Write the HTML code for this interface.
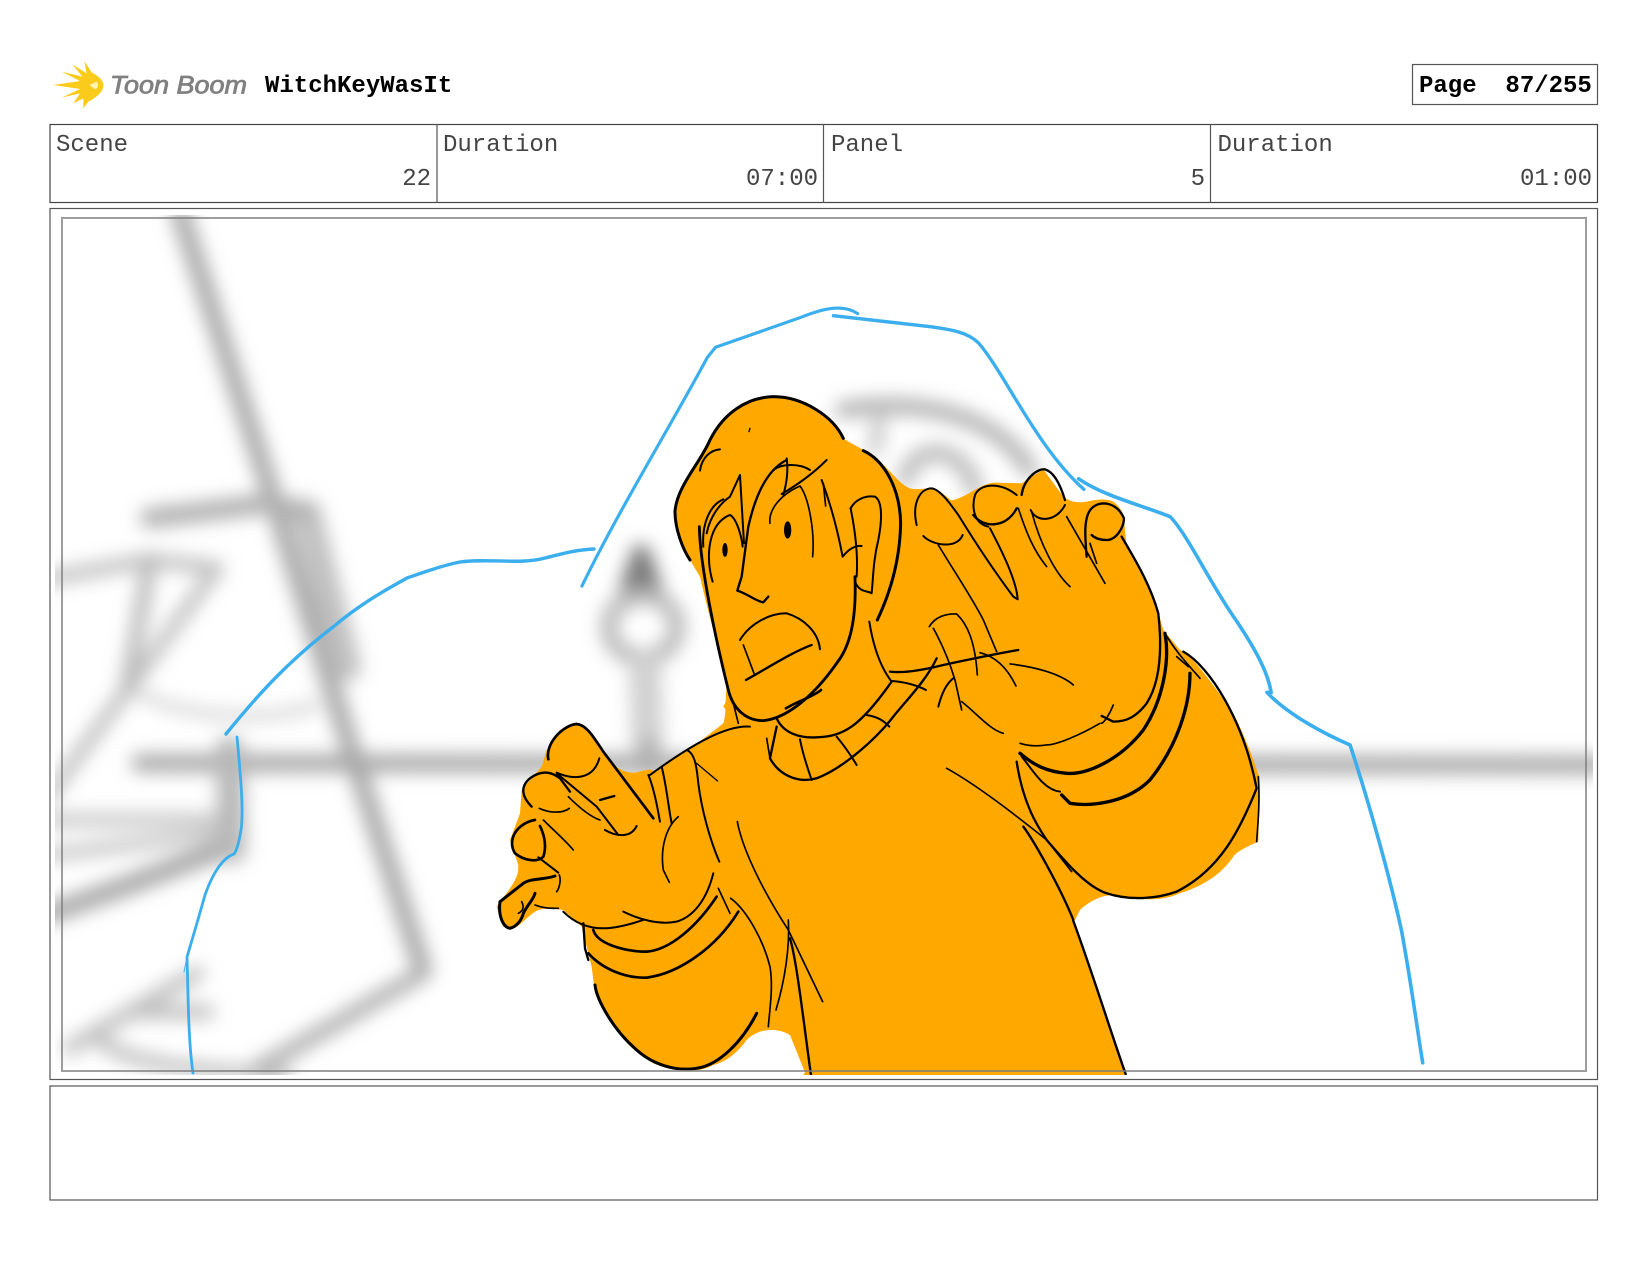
<!DOCTYPE html>
<html><head><meta charset="utf-8"><title>WitchKeyWasIt</title>
<style>
html,body{margin:0;padding:0;background:#fff;width:1650px;height:1275px;overflow:hidden}
svg{display:block}
text{font-family:"Liberation Mono",monospace;font-size:24px;fill:#444}
.b{font-weight:bold;fill:#000}
.k path{fill:none;stroke:#000;stroke-linecap:round;stroke-linejoin:round}
.o{fill:#FFA800;stroke:none}
</style></head><body>
<svg width="1650" height="1275" viewBox="0 0 1650 1275" xmlns="http://www.w3.org/2000/svg">
<defs>
<filter id="bl" x="0" y="0" width="1650" height="1275" filterUnits="userSpaceOnUse" primitiveUnits="userSpaceOnUse"><feGaussianBlur stdDeviation="9"/></filter>
<filter id="ls" x="0" y="0" width="300" height="200" filterUnits="userSpaceOnUse"><feGaussianBlur stdDeviation=".5"/></filter>
<clipPath id="cb"><rect x="55" y="215" width="1538" height="860"/></clipPath>
<clipPath id="cd"><rect x="55" y="215" width="1538" height="860"/></clipPath>
</defs>
<rect width="1650" height="1275" fill="#fff"/>

<!-- logo -->
<g transform="translate(45 55) scale(.3333)" filter="url(#ls)">
<path fill="#FBCB1E" d="M25,90 L105,78 L50,50 L112,65 L82,28 L125,55 L118,18 L140,52 C165,65 178,80 175,95 C172,115 150,130 130,140 L115,160 L115,130 L85,145 L105,115 L50,128 L105,102 Z"/>
<path fill="#FFF3B0" d="M133,90 L155,80 C162,90 160,100 150,103 Z"/>
</g>
<text x="110" y="93.500" textLength="137" lengthAdjust="spacingAndGlyphs" style="font-family:'Liberation Sans',sans-serif;font-style:italic;font-size:25px;fill:#808080;stroke:#808080;stroke-width:.8">Toon Boom</text>
<text class="b" x="265" y="92">WitchKeyWasIt</text>

<rect x="1412.500" y="64.500" width="185" height="40" fill="#fff" stroke="#555" stroke-width="1.2"/>
<text class="b" x="1419" y="92" xml:space="preserve">Page  87/255</text>

<!-- header table -->
<rect x="50" y="124.500" width="1547.500" height="78" fill="#fff" stroke="#444" stroke-width="1.2"/>
<path d="M437,124V203M823.500,124V203M1210.500,124V203" stroke="#555" stroke-width="1.2" fill="none"/>
<text x="56" y="151">Scene</text>
<text x="443" y="151">Duration</text>
<text x="831" y="151">Panel</text>
<text x="1217.500" y="151">Duration</text>
<text x="431" y="185" text-anchor="end">22</text>
<text x="818" y="185" text-anchor="end">07:00</text>
<text x="1205" y="185" text-anchor="end">5</text>
<text x="1592" y="185" text-anchor="end">01:00</text>

<!-- picture box -->
<rect x="50" y="208.500" width="1547.500" height="871" fill="#fff" stroke="#555" stroke-width="1.2"/>

<!-- blurred bg -->
<g clip-path="url(#cb)"><g filter="url(#bl)" fill="none" stroke="#a8a8a8" stroke-linecap="round" stroke-linejoin="round">
<path stroke-width="19" d="M180,212 L272,495 L355,762 L423,970"/>
<path stroke-width="28" stroke="#c0c0c0" d="M307,513 L347,667"/>
<path stroke-width="20" stroke="#b0b0b0" d="M150,518 L273,503 L305,512"/>
<path stroke="#c0c0c0" stroke-width="14" d="M40,580 L150,560 L217,568 L127,690 L45,800"/>
<path stroke="#b8b8b8" stroke-width="15" d="M150,560 L127,690"/>
<path stroke="#a8a8a8" stroke-width="18" d="M140,763 L1600,765"/>
<path stroke="#d4d4d4" stroke-width="10" d="M140,693 C170,715 270,725 315,705"/>
<path stroke="#c8c8c8" stroke-width="14" d="M40,820 L227,820 M40,856 L223,833"/>
<path stroke="#a8a8a8" stroke-width="20" d="M45,915 L123,887 L227,847"/>
<path stroke="#b8b8b8" stroke-width="28" d="M230,750 L232,850"/>
<path stroke="#b0b0b0" stroke-width="16" d="M423,973 L253,1072"/>
<path stroke="#c0c0c0" stroke-width="15" d="M70,1048 L197,973 M140,1012 L207,1012"/>
<path stroke="#bcbcbc" stroke-width="13" d="M100,1040 C125,1062 180,1070 287,1076"/>
<path fill="#555" stroke="#7a7a7a" stroke-width="18" d="M641,553 L628,590 L654,590 Z"/>
<ellipse cx="643" cy="627" rx="34" ry="31" stroke="#b8b8b8" stroke-width="17"/>
<path stroke="#d0d0d0" stroke-width="32" d="M645,668 L648,750"/>
<path stroke="#a8a8a8" stroke-width="16" d="M648,745 L648,770"/>
<path stroke="#b0b0b0" stroke-width="16" d="M843,410 C900,400 990,405 1030,470"/>
<path stroke="#bcbcbc" stroke-width="17" d="M905,480 C915,440 965,445 975,490"/>
<path stroke="#c4c4c4" stroke-width="13" d="M880,415 L875,450"/>
</g></g>

<!-- drawing -->
<g clip-path="url(#cd)">
<!-- fills -->
<polygon class="o" points="806,1075 1126,1075 1073,920 1023,827 800,800 760,960"/>
<g transform="translate(560 380) scale(.3333)">
<path class="o" d="M390,540 C370,510 345,450 345,395 C350,320 420,250 450,180 C490,100 560,52 640,50 C730,50 820,110 850,175 C870,190 900,200 930,225 C980,250 1010,310 1050,325 C1070,330 1095,325 1110,325 C1140,330 1160,350 1175,362 C1220,350 1250,320 1290,310 L1440,310 L1440,1200 L270,1200 C350,1130 430,1080 490,1030 C500,1000 495,960 500,920 C480,820 440,680 420,590 Z"/>
</g>
<g transform="translate(900 460) scale(.3333)">
<path class="o" d="M0,70 C20,85 30,95 40,95 L150,122 C175,118 200,110 220,100 C240,80 260,72 280,68 L365,70 L430,28 L490,110 C510,125 530,130 560,125 C590,118 620,115 640,125 C660,140 672,160 672,180 L680,260 C720,330 750,390 770,440 L790,510 L840,570 C880,590 930,660 1000,760 C1040,840 1060,900 1078,950 L1075,1145 C1040,1160 1010,1175 1000,1190 C970,1235 920,1275 840,1300 C800,1318 770,1318 740,1318 C700,1318 660,1305 640,1305 C600,1305 560,1330 540,1350 L525,1380 L0,1380 Z"/>
</g>
<g transform="translate(480 700) scale(.3333)">
<path class="o" d="M740,0 L1500,0 L1500,1125 L970,1125 L985,1100 C985,1060 960,1020 920,1000 C880,980 830,990 800,1020 C770,1060 740,1085 700,1095 C670,1112 640,1112 620,1112 C580,1112 540,1100 520,1090 C460,1050 390,970 345,880 L335,800 L305,680 L250,630 C220,625 190,625 175,630 C150,640 120,680 100,685 L70,680 L50,620 C70,590 90,570 105,540 C115,520 115,510 115,495 L90,420 L120,340 L125,270 L185,200 L200,150 L240,90 L290,72 L320,85 L400,195 C420,210 440,218 460,218 C480,218 500,205 515,210 L530,215 L620,150 L700,100 L760,60 L730,20 Z"/>
</g>

<!-- blue lines -->
<g fill="none" stroke="#3BAEEE" stroke-linecap="round" stroke-linejoin="round">
<path stroke-width="3.400" d="M226,734 C260,692 290,660 333,627 C365,600 395,585 407,578 C430,570 445,565 460,562 C490,558 520,565 545,558 C565,553 575,550 594,549"/>
<path stroke-width="2.800" d="M237,737 C240,770 244,810 241,830 C239,842 237,850 234,854 C222,858 212,875 205,895 C198,920 192,940 187,957 C188,985 188,1040 193,1073"/>
<path stroke-width="1" d="M187,957 L184,972"/>
</g>
<g transform="scale(1.0523)" fill="none" stroke="#3BAEEE" stroke-linecap="round" stroke-linejoin="round">
<path stroke-width="3" d="M553,557 C585,490 640,400 672,340 L680,330 L760,302 C780,294 800,288 815,298"/>
<path stroke-width="3.200" d="M792,300 L880,310 C905,313 920,316 930,326 C955,355 985,425 1030,465"/>
<path stroke-width="3.400" d="M1025,455 C1050,472 1085,480 1112,491 C1130,510 1150,555 1175,590 C1195,620 1205,640 1208,658 L1204,658 C1225,680 1260,698 1283,708 C1300,760 1320,830 1332,885 C1342,940 1347,980 1352,1010"/>
</g>

<!-- face -->
<g class="k" transform="translate(560 380) scale(.3333)" stroke-width="7">
<path d="M850,175 C820,110 730,50 640,50 C560,52 490,100 450,180 C420,250 350,320 345,395 C345,450 370,510 390,540" stroke-width="9"/>
<path d="M480,208 C450,210 425,235 420,272" stroke-width="6"/>
<path d="M570,145 L567,155" stroke-width="4"/>
<path d="M910,212 C970,240 1020,320 1022,430 C1020,540 990,640 952,720" stroke-width="9"/>
<path d="M418,440 C420,560 470,790 505,930 C520,990 560,1022 610,1022 C680,1015 760,950 830,850 C870,800 890,720 885,590" stroke-width="8.500"/>
<path d="M520,970 L535,1030" stroke-width="5"/>
<path d="M678,985 C710,965 760,950 783,930" stroke-width="8"/>
<path d="M430,500 C425,430 450,375 490,358" stroke-width="6"/>
<path d="M440,460 C450,410 480,370 510,350 L540,285 L552,490" stroke-width="6"/>
<path d="M458,605 C435,530 445,430 510,405 C530,415 545,470 548,500" stroke-width="6"/>
<path d="M680,240 C620,270 585,350 565,440 L545,590 L532,632 C560,640 590,665 610,667 L625,650" stroke-width="7"/>
<path d="M640,270 C665,250 720,250 750,270" stroke-width="6"/>
<path d="M680,235 C685,270 680,310 670,345" stroke-width="6"/>
<path d="M800,240 C760,280 720,310 665,342" stroke-width="6"/>
<path d="M630,430 C625,390 660,345 720,318 C745,350 765,450 758,530" stroke-width="5"/>
<path d="M785,300 C800,340 825,410 848,530 C860,515 880,495 905,498" stroke-width="6"/>
<path d="M790,310 L797,378" stroke-width="5"/>
<path d="M872,385 C885,360 915,345 945,350 C970,365 965,430 955,480 C940,540 940,590 935,640 C920,630 900,640 885,605" stroke-width="6"/>
<path d="M872,385 C885,450 895,520 890,590" stroke-width="6"/>
<ellipse cx="683" cy="450" rx="11" ry="26" fill="#000"/>
<ellipse cx="495" cy="510" rx="8" ry="21" fill="#000"/>
<path d="M540,780 C570,730 630,700 680,700 C730,715 775,755 780,808" stroke-width="6"/>
<path d="M550,795 L582,880" stroke-width="5"/>
<path d="M558,900 C630,860 690,820 755,795" stroke-width="7"/>
<path d="M928,725 C940,800 960,860 995,905" stroke-width="6"/>
<path d="M990,875 C1030,880 1090,870 1150,855 C1220,840 1290,825 1375,810" stroke-width="7"/>
<path d="M995,903 C1030,905 1070,915 1098,930" stroke-width="6"/>
<path d="M1130,835 C1100,900 1040,960 1000,1010 C950,1075 850,1165 770,1195 C720,1210 660,1190 630,1135 L650,1040" stroke-width="7"/>
<path d="M650,1015 C670,1060 720,1075 770,1072 C850,1070 900,1040 995,905" stroke-width="7"/>
<path d="M920,1005 C950,1010 970,1020 988,1040" stroke-width="6"/>
<path d="M830,1070 C855,1100 875,1130 890,1155" stroke-width="6"/>
<path d="M720,1078 C730,1130 745,1170 755,1200" stroke-width="6"/>
<path d="M620,1075 L630,1135" stroke-width="5"/>
<path d="M570,1040 C500,1035 400,1090 270,1185" stroke-width="6"/>
</g>

<!-- right hand & arm -->
<g class="k" transform="translate(900 460) scale(.3333)" stroke-width="6">
<path d="M50,195 C35,130 60,85 95,85 C120,88 150,130 175,165 C215,230 280,330 340,410 L353,418 C350,370 320,300 270,205"/>
<path d="M70,228 C95,255 170,270 188,225"/>
<path d="M115,255 C160,330 220,420 250,480 L290,575" stroke-width="5"/>
<path d="M265,200 C220,190 215,140 225,105 C240,70 300,65 350,105"/>
<path d="M220,165 C250,205 320,205 350,145" stroke-width="7"/>
<path d="M365,105 C370,60 410,25 435,28 C460,35 480,70 495,120" stroke-width="7"/>
<path d="M392,150 C410,190 470,185 495,135"/>
<path d="M355,145 C380,220 400,270 440,320" stroke-width="5"/>
<path d="M395,155 C420,250 465,340 510,380" stroke-width="5"/>
<path d="M500,170 L615,370" stroke-width="5"/>
<path d="M560,290 C555,230 550,170 575,145 C600,120 650,125 672,175 C672,200 650,240 620,240 C600,240 585,235 575,225" stroke-width="7"/>
<path d="M570,250 L590,310" stroke-width="5"/>
<path d="M665,230 C700,290 750,370 775,460 C785,550 785,660 740,730 C710,770 680,785 640,785 L605,768" stroke-width="7"/>
<path d="M640,735 C630,760 615,785 605,790" stroke-width="5"/>
<path d="M360,850 C390,860 420,858 440,855 C470,855 540,825 600,790" stroke-width="5"/>
<path d="M185,725 C230,760 270,810 310,820" stroke-width="5"/>
<path d="M88,500 C105,470 140,460 170,462 C200,490 225,540 232,645" stroke-width="5"/>
<path d="M100,505 C125,550 150,610 165,660 L185,750" stroke-width="5"/>
<path d="M330,612 C400,620 480,640 520,675" stroke-width="5"/>
<path d="M240,578 C290,590 325,630 348,678" stroke-width="5"/>
<path d="M115,740 C125,700 140,670 160,655" stroke-width="6"/>
<path d="M795,520 C810,600 790,720 730,810 C660,900 560,945 500,940 C440,935 400,915 360,880" stroke-width="10"/>
<path d="M365,890 C395,925 430,990 480,995" stroke-width="6"/>
<path d="M870,640 C870,740 830,860 750,960 C680,1030 570,1040 510,1030 L485,1005" stroke-width="10"/>
<path d="M795,520 C830,580 870,620 900,655" stroke-width="5"/>
<path d="M830,590 L865,620" stroke-width="5"/>
<path d="M850,575 C930,620 1030,780 1070,985 C1020,1110 960,1230 830,1295 C760,1320 680,1320 620,1300 C560,1280 500,1210 440,1140 C420,1110 370,1040 350,905" stroke-width="7"/>
<path d="M140,925 C230,975 340,1060 440,1140 L515,1235" stroke-width="5"/>
<path d="M370,1100 C400,1140 480,1280 520,1380" stroke-width="7"/>
<path d="M1075,950 C1080,1020 1075,1080 1070,1145" stroke-width="5"/>
</g>

<!-- left hand & arm -->
<g class="k" transform="translate(480 700) scale(.3333)" stroke-width="6">
<path d="M205,178 C195,130 250,75 290,72 C320,75 340,110 370,155 L520,355" stroke-width="8"/>
<path d="M230,218 C280,240 340,240 358,175"/>
<path d="M360,300 L403,288" stroke-width="7"/>
<path d="M230,220 L350,320 L415,405" stroke-width="6"/>
<path d="M265,290 C295,320 330,350 360,360" stroke-width="5"/>
<path d="M375,390 C400,405 450,420 470,378"/>
<path d="M155,320 C125,290 120,260 150,235 C190,205 220,220 240,235 L270,275" stroke-width="7"/>
<path d="M178,325 C210,340 250,340 268,325" stroke-width="5"/>
<path d="M165,360 C110,370 80,420 105,460 C130,480 170,490 190,470 C200,440 195,410 180,378" stroke-width="8"/>
<path d="M190,360 C220,390 255,420 280,450" stroke-width="5"/>
<path d="M175,472 L235,518" stroke-width="6"/>
<path d="M238,525 C245,545 235,570 230,575" stroke-width="5"/>
<path d="M225,528 C190,540 150,535 130,550 L60,605 C55,640 65,680 90,685 C110,680 125,660 130,640 C145,610 160,600 165,580" stroke-width="9"/>
<path d="M115,640 C135,630 130,615 125,605" stroke-width="5"/>
<path d="M165,615 C190,625 210,625 235,625" stroke-width="5"/>
<path d="M250,635 C280,665 320,685 370,685 C410,685 460,670 490,660"/>
<path d="M430,635 C480,660 540,675 590,665 C640,650 680,600 700,520"/>
<path d="M310,670 L315,745 L325,780" stroke-width="7"/>
<path d="M340,690 C350,730 430,755 500,755 C570,750 650,680 710,590" stroke-width="8"/>
<path d="M325,760 C370,810 440,835 500,833 C600,820 710,740 775,635" stroke-width="8"/>
<path d="M715,565 L750,640" stroke-width="5"/>
<path d="M505,225 C525,270 535,340 540,365" stroke-width="6"/>
<path d="M545,200 C560,260 565,320 575,370" stroke-width="6"/>
<path d="M595,350 C560,380 540,440 550,510 L568,547" stroke-width="5"/>
<path d="M620,150 C645,160 650,200 655,250 C665,330 690,420 718,485" stroke-width="6"/>
<path d="M650,190 L713,243" stroke-width="4"/>
<path d="M772,365 C790,460 860,590 925,690 L1028,905" stroke-width="5"/>
<path d="M925,660 C930,740 915,840 888,930" stroke-width="5"/>
<path d="M930,715 C950,780 970,960 993,1125" stroke-width="7"/>
<path d="M752,595 C800,630 850,720 870,800 C880,860 870,920 865,980" stroke-width="5"/>
<path d="M345,855 C350,900 400,990 470,1050 C520,1095 590,1115 650,1105 C720,1095 790,1020 830,940" stroke-width="9"/>
</g>
<path d="M1073,920 C1095,980 1110,1030 1126,1075" fill="none" stroke="#000" stroke-width="2.400"/>
</g>

<!-- inner frame -->
<rect x="62" y="218" width="1524" height="853" fill="none" stroke="#7e7e7e" stroke-opacity=".75" stroke-width="2"/>

<!-- bottom box -->
<rect x="50" y="1086" width="1547.500" height="114" fill="#fff" stroke="#555" stroke-width="1.2"/>
</svg>
</body></html>
